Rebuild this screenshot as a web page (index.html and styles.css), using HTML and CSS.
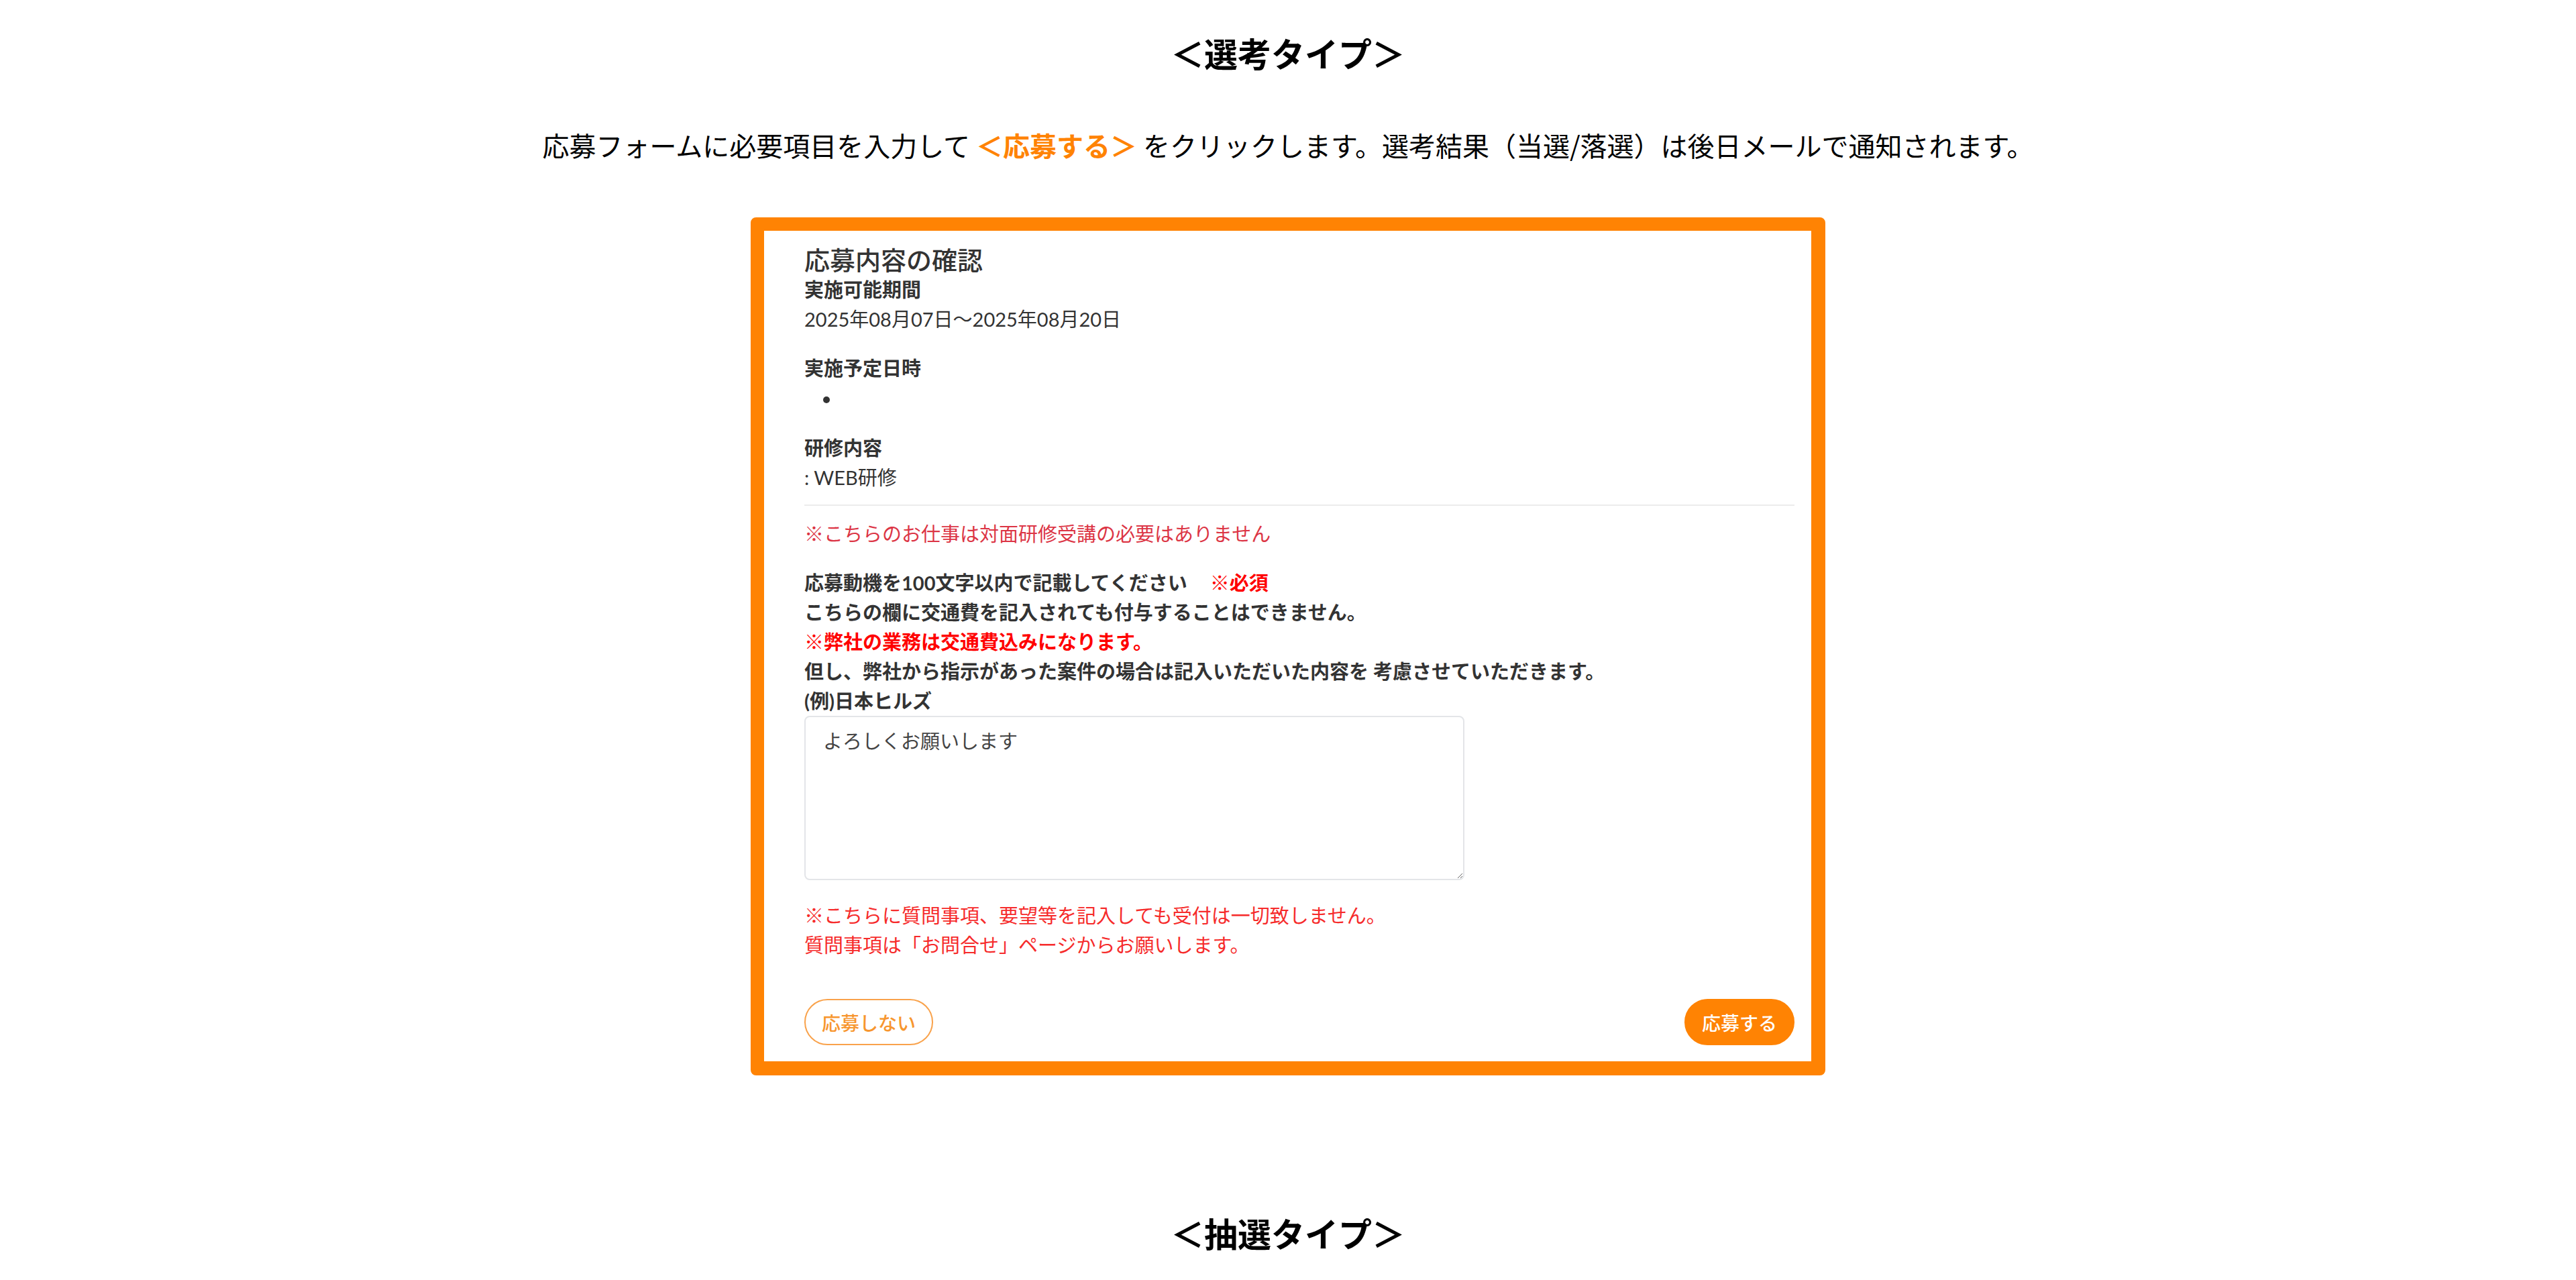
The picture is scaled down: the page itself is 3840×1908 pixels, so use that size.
FILE: index.html
```html
<!DOCTYPE html>
<html lang="ja">
<head>
    <meta charset="UTF-8">
    <meta name="viewport" content="width=device-width, initial-scale=1.0">
    <title>応募の流れ</title>
    <link rel="stylesheet" href="styles.css">
</head>
<body>
    <section class="type-block">
        <h2 class="type-title">＜選考タイプ＞</h2>
        <p class="type-lead">応募フォームに必要項目を入力して <span class="accent">＜応募する＞</span> をクリックします。選考結果（当選/落選）は後日メールで通知されます。</p>

        <div class="preview">
            <div class="confirm">
                <h3 class="confirm-title">応募内容の確認</h3>

                <dl class="detail">
                    <dt>実施可能期間</dt>
                    <dd>2025年08月07日〜2025年08月20日</dd>

                    <dt>実施予定日時</dt>
                    <dd>
                        <ul class="schedule">
                            <li></li>
                        </ul>
                    </dd>

                    <dt>研修内容</dt>
                    <dd class="last">: WEB研修</dd>
                </dl>

                <hr class="divider">

                <p class="note">※こちらのお仕事は対面研修受講の必要はありません</p>

                <div class="motive">
                    <p>応募動機を100文字以内で記載してください<span class="required">※必須</span></p>
                    <p>こちらの欄に交通費を記入されても付与することはできません。</p>
                    <p class="alert">※弊社の業務は交通費込みになります。</p>
                    <p>但し、弊社から指示があった案件の場合は記入いただいた内容を 考慮させていただきます。</p>
                    <p>(例)日本ヒルズ</p>
                </div>

                <textarea class="motive-input">よろしくお願いします</textarea>

                <div class="warn">
                    <p>※こちらに質問事項、要望等を記入しても受付は一切致しません。</p>
                    <p>質問事項は「お問合せ」ページからお願いします。</p>
                </div>

                <div class="actions">
                    <button class="btn btn-outline" type="button">応募しない</button>
                    <button class="btn btn-fill" type="button">応募する</button>
                </div>
            </div>
        </div>
    </section>

    <section class="type-block">
        <h2 class="type-title">＜抽選タイプ＞</h2>
    </section>
</body>
</html>
```

FILE: styles.css
```css
body {
    margin: 0;
    background-color: #fff;
    color: #000;
    font-family: 'Noto Sans CJK JP', 'Noto Sans', sans-serif;
}

.type-block {
    display: flex;
    flex-direction: column;
    align-items: center;
    padding-top: 41px;
}

.type-block + .type-block {
    padding-top: 197px;
}

.type-title {
    margin: 0;
    font-size: 50px;
    font-weight: bold;
    line-height: 75px;
}

.type-lead {
    margin: 70px 0 78px;
    font-size: 40px;
    line-height: 60px;
}

.accent {
    color: #ff8303;
    font-weight: bold;
}

/* orange framed capture of the confirm form */
.preview {
    width: 1602px;
    box-sizing: border-box;
    border: 20px solid #ff8303;
    border-bottom-width: 21px;
    border-right-width: 21px;
    border-radius: 8px;
    background-color: #fff;
}

.confirm {
    padding: 20px 25px 24px 60px;
    font-family: 'Lato', 'Noto Sans CJK JP', sans-serif;
    font-size: 29px;
    line-height: 44px;
    color: #333;
}

.confirm p {
    margin: 0;
}

.confirm-title {
    margin: 0;
    font-size: 38px;
    font-weight: 500;
    line-height: 46px;
}

.detail {
    margin: 0;
}

.detail dt {
    font-weight: bold;
}

.detail dd {
    margin: 0 0 29px;
}

.detail dd.last {
    margin-bottom: 0;
}

.schedule {
    margin: 0;
    padding-left: 54px;
    min-height: 44px;
}

.schedule li {
    min-height: 44px;
    line-height: 46px;
}

.divider {
    margin: 18px 0 20px;
    border: 0;
    border-top: 2px solid #ececec;
}

.note {
    color: #dc3545;
}

.motive {
    margin-top: 29px;
    font-weight: bold;
}

.required {
    margin-left: 34px;
    color: #f00;
}

.alert {
    color: #f00;
}

.motive-input {
    display: block;
    width: 984px;
    height: 245px;
    box-sizing: border-box;
    padding: 14px 26px;
    border: 2px solid #e3e5e8;
    border-radius: 8px;
    font-family: 'Lato', 'Noto Sans CJK JP', sans-serif;
    font-size: 29px;
    line-height: 44px;
    color: #444;
}

.warn {
    margin-top: 31px;
    color: #f62b2b;
}

.actions {
    display: flex;
    justify-content: space-between;
    margin-top: 58px;
}

.btn {
    height: 69px;
    padding: 0 24px;
    border-radius: 35px;
    font-family: 'Lato', 'Noto Sans CJK JP', sans-serif;
    font-size: 28px;
    font-weight: 500;
    cursor: pointer;
}

.btn-outline {
    border: 2px solid #f9a24b;
    background-color: #fff;
    color: #f7962f;
}

.btn-fill {
    border: 2px solid #ff8303;
    background-color: #ff8303;
    color: #fff;
}
```
